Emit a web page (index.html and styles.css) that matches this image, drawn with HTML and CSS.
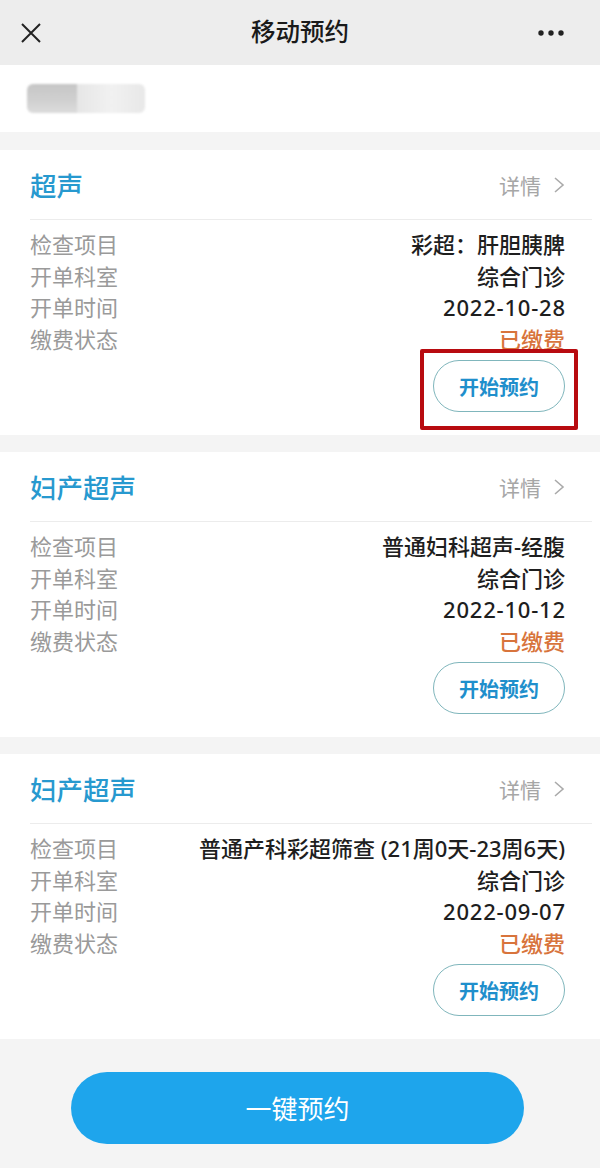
FILE: index.html
```html
<!DOCTYPE html>
<html lang="zh">
<head>
<meta charset="utf-8">
<link rel="stylesheet" href="styles.css">
</head>
<body>
<div class="page">
  <header class="topbar">
    <svg class="close" width="22" height="22" viewBox="0 0 22 22"><path d="M2 2L20 20M20 2L2 20" stroke="#222" stroke-width="2" fill="none"/></svg>
    <div class="title">移动预约</div>
    <svg class="more" width="28" height="8" viewBox="0 0 28 8"><circle cx="4" cy="4" r="2.7" fill="#222"/><circle cx="14" cy="4" r="2.7" fill="#222"/><circle cx="24" cy="4" r="2.7" fill="#222"/></svg>
  </header>
  <section class="namebar"><div class="blur"><span class="b1"></span><span class="b2"></span></div></section>

  <section class="card">
    <div class="card-head"><span class="cat">超声</span><span class="detail">详情<svg width="12" height="18" viewBox="0 0 12 18"><path d="M2 2L10 9L2 16" stroke="#aaa" stroke-width="1.6" fill="none"/></svg></span></div>
    <div class="rows">
      <div class="row"><span class="lbl">检查项目</span><span class="val">彩超：肝胆胰脾</span></div>
      <div class="row"><span class="lbl">开单科室</span><span class="val">综合门诊</span></div>
      <div class="row"><span class="lbl">开单时间</span><span class="val num">2022-10-28</span></div>
      <div class="row"><span class="lbl">缴费状态</span><span class="val paid">已缴费</span></div>
    </div>
    <div class="actions"><button class="start highlighted">开始预约</button></div>
  </section>

  <section class="card">
    <div class="card-head"><span class="cat">妇产超声</span><span class="detail">详情<svg width="12" height="18" viewBox="0 0 12 18"><path d="M2 2L10 9L2 16" stroke="#aaa" stroke-width="1.6" fill="none"/></svg></span></div>
    <div class="rows">
      <div class="row"><span class="lbl">检查项目</span><span class="val">普通妇科超声-经腹</span></div>
      <div class="row"><span class="lbl">开单科室</span><span class="val">综合门诊</span></div>
      <div class="row"><span class="lbl">开单时间</span><span class="val num">2022-10-12</span></div>
      <div class="row"><span class="lbl">缴费状态</span><span class="val paid">已缴费</span></div>
    </div>
    <div class="actions"><button class="start">开始预约</button></div>
  </section>

  <section class="card">
    <div class="card-head"><span class="cat">妇产超声</span><span class="detail">详情<svg width="12" height="18" viewBox="0 0 12 18"><path d="M2 2L10 9L2 16" stroke="#aaa" stroke-width="1.6" fill="none"/></svg></span></div>
    <div class="rows">
      <div class="row"><span class="lbl">检查项目</span><span class="val">普通产科彩超筛查 (21周0天-23周6天)</span></div>
      <div class="row"><span class="lbl">开单科室</span><span class="val">综合门诊</span></div>
      <div class="row"><span class="lbl">开单时间</span><span class="val num">2022-09-07</span></div>
      <div class="row"><span class="lbl">缴费状态</span><span class="val paid">已缴费</span></div>
    </div>
    <div class="actions"><button class="start">开始预约</button></div>
  </section>

  <footer class="bottom"><button class="onekey">一键预约</button></footer>
</div>
</body>
</html>
```
FILE: styles.css
```css
* { box-sizing: border-box; }
html, body { margin: 0; padding: 0; }
body {
  width: 600px;
  height: 1168px;
  overflow: hidden;
  background: #f4f4f4;
  font-family: "Noto Sans", "Noto Sans CJK SC", sans-serif;
}
.page { display: flex; flex-direction: column; }
.topbar {
  height: 65px;
  background: #ededed;
  display: flex;
  align-items: center;
  justify-content: space-between;
  padding: 0 35px 0 20px;
  position: relative;
}
.topbar .title {
  position: absolute;
  left: 0; right: 0; top: 0;
  line-height: 63px;
  text-align: center;
  font-size: 24.5px;
  font-weight: 500;
  color: #1a1a1a;
  pointer-events: none;
}
.namebar {
  height: 67px;
  background: #fff;
  display: flex;
  align-items: center;
  padding-left: 27px;
  margin-bottom: 18px;
}
.blur {
  display: flex;
  width: 118px;
  height: 29px;
  border-radius: 6px;
  overflow: hidden;
  filter: blur(1.2px);
}
.blur .b1 { width: 50px; background: linear-gradient(180deg, #c6c6c6, #d0d0d0 55%, #dcdcdc); }
.blur .b2 { flex: 1; background: linear-gradient(90deg, #e6e6e6, #f1f1f1 50%, #e8e8e8); }
.card {
  background: #fff;
  height: 285px;
  margin-bottom: 17px;
  padding-left: 30px;
}
.card-head {
  height: 70px;
  border-bottom: 1px solid #ececec;
  display: flex;
  align-items: center;
  justify-content: space-between;
  padding-right: 35px;
  margin-right: 8px;
}
.cat { font-size: 26.5px; color: #2799cf; font-weight: 500; }
.detail { font-size: 21px; color: #a6a6a6; display: flex; align-items: center; gap: 12px; margin-right: -8px; }
.rows { padding: 9px 35px 0 0; }
.row {
  display: flex;
  justify-content: space-between;
  height: 31.5px;
  line-height: 31.5px;
  font-size: 22px;
}
.lbl { color: #9a9a9a; }
.val { color: #1e1e1e; font-weight: 500; }
.val.num { letter-spacing: 0.8px; margin-right: -0.8px; }
.val.paid { color: #d8743c; }
.actions {
  display: flex;
  justify-content: flex-end;
  padding: 5px 35px 0 0;
}
.start {
  width: 132px;
  height: 52px;
  border: 1.5px solid #80b6bc;
  border-radius: 26px;
  background: #fff;
  color: #1f8fcc;
  font-family: inherit;
  font-size: 20px;
  font-weight: 700;
  padding: 0;
}
.start.highlighted { position: relative; }
.start.highlighted::after {
  content: "";
  position: absolute;
  top: -12px;
  bottom: -19px;
  left: -14px;
  right: -14px;
  border: 4px solid #b80b10;
  border-radius: 2px;
}
.bottom {
  height: 128px;
  background: #f4f4f4;
  display: flex;
  justify-content: center;
  padding-top: 16px;
  padding-right: 5px;
}
.onekey {
  width: 453px;
  height: 72px;
  border: none;
  border-radius: 36px;
  background: #1ea5ec;
  color: #fff;
  font-family: inherit;
  font-size: 26px;
}
```
